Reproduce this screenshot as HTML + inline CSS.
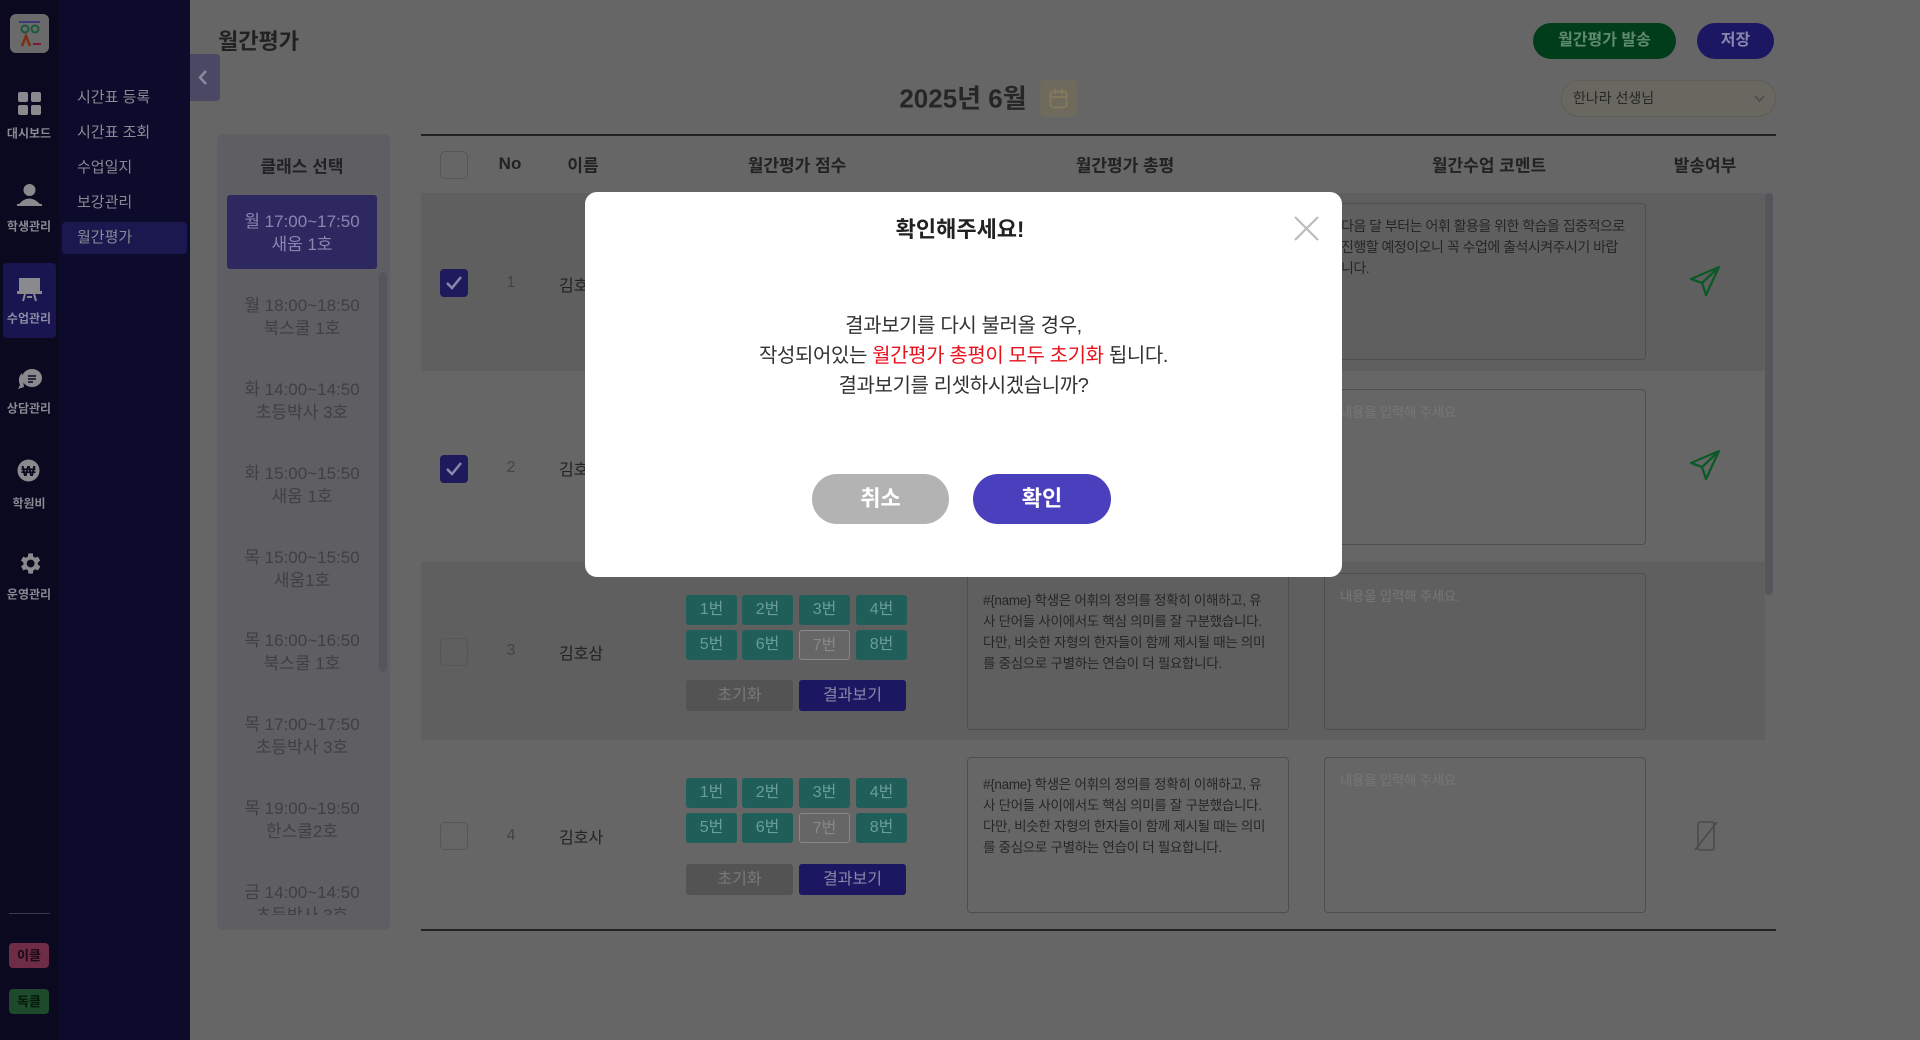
<!DOCTYPE html>
<html><head><meta charset="utf-8"><style>
*{margin:0;padding:0;box-sizing:border-box}
body{width:1920px;height:1040px;overflow:hidden;background:#666;font-family:"Liberation Sans","Noto Sans CJK KR",sans-serif;position:relative;color:#222}
.a{position:absolute}
.c{position:absolute;transform:translate(-50%,-50%);white-space:nowrap}
.nav{color:#8a8a94;font-size:12px;font-weight:bold}
.sub{color:#8a8a94;font-size:15px}
.cls{color:#3f3f44;font-size:17px;text-align:center;line-height:23px}
.hd{font-size:17px;font-weight:bold;color:#222}
.cb{position:absolute;width:28px;height:28px;border:1.5px solid #555;border-radius:5px}
.cbk{position:absolute;width:28px;height:28px;background:#1e1a5c;border-radius:4px}
.sb{position:absolute;width:51px;height:30px;background:#1f5e59;border-radius:3px;color:#6a9d98;font-size:16px;text-align:center;line-height:30px}
.so{background:#666;border:1px solid #888;color:#888}
.rst{position:absolute;width:107px;height:31px;background:#535353;border-radius:3px;color:#7a7a7a;font-size:16px;text-align:center;line-height:31px}
.res{position:absolute;width:107px;height:31px;background:#1b1760;border-radius:3px;color:#8a88a8;font-size:16px;text-align:center;line-height:31px}
.ta{position:absolute;border:1px solid #4e4e4e;border-radius:4px;padding:16px 15px;font-size:13.5px;letter-spacing:-0.3px;line-height:21px;color:#262626}
.ph{color:#777}
</style></head><body>
<div class="a" style="left:0;top:0;width:59px;height:1040px;background:#0a0920"></div>
<div class="a" style="left:59px;top:0;width:131px;height:1040px;background:#0d0b2b"></div>
<div class="a" style="left:10px;top:14px;width:39px;height:39px;background:#6a6a6a;border-radius:6px"></div>
<svg class="a" style="left:10px;top:14px" width="39" height="39"><rect x="9" y="7" width="21" height="2" fill="#3a3a7a"/><circle cx="15" cy="15" r="3.5" fill="none" stroke="#1a5a3a" stroke-width="2"/><circle cx="25" cy="15" r="3.5" fill="none" stroke="#1a5a3a" stroke-width="2"/><path d="M12 32 L16 22 L20 32" stroke="#7a3010" stroke-width="2.5" fill="none"/><rect x="23" y="29" width="8" height="2" fill="#7a1a3a"/></svg>
<svg class="a" style="left:18px;top:92px" width="23" height="23"><rect x="0" y="0" width="10" height="10" rx="2" fill="#8a8a8e"/><rect x="13" y="0" width="10" height="10" rx="2" fill="#8a8a8e"/><rect x="0" y="13" width="10" height="10" rx="2" fill="#8a8a8e"/><rect x="13" y="13" width="10" height="10" rx="2" fill="#8a8a8e"/></svg>
<div class="c nav" style="left:29px;top:133px">대시보드</div>
<svg class="a" style="left:16px;top:183px" width="27" height="25"><circle cx="13.5" cy="7" r="6" fill="#8a8a8e"/><path d="M3 21 Q13 10 24 21Z" fill="#8a8a8e"/><rect x="1" y="21" width="25" height="2" fill="#8a8a8e"/></svg>
<div class="c nav" style="left:29px;top:226px">학생관리</div>
<div class="a" style="left:3px;top:263px;width:53px;height:75px;background:#181550;border-radius:4px"></div>
<svg class="a" style="left:17px;top:278px" width="25" height="24"><rect x="2" y="0" width="21" height="13" fill="#8a8a8e"/><rect x="0" y="13" width="25" height="3" fill="#8a8a8e"/><path d="M6 23 L8 16 M19 23 L17 16 M10 19h5" stroke="#8a8a8e" stroke-width="2"/></svg>
<div class="c nav" style="left:29px;top:318px;color:#8c8ca4">수업관리</div>
<svg class="a" style="left:16px;top:367px" width="27" height="25"><path d="M6 6 Q1 11 4 18 L2 22 L8 20Z" fill="#8a8a8e"/><ellipse cx="16" cy="11" rx="10" ry="9" fill="#8a8a8e"/><path d="M12 9h8M12 12h8M12 15h5" stroke="#0a0920" stroke-width="1.5"/></svg>
<div class="c nav" style="left:29px;top:408px">상담관리</div>
<svg class="a" style="left:17px;top:459px" width="23" height="23"><circle cx="11.5" cy="11.5" r="11" fill="#8a8a8e"/><text x="11.5" y="17" font-size="15" font-weight="bold" text-anchor="middle" fill="#0a0920" font-family="Liberation Sans">₩</text></svg>
<div class="c nav" style="left:29px;top:503px">학원비</div>
<svg class="a" style="left:16px;top:550px" width="27" height="27" viewBox="0 0 24 24"><path fill="#8a8a8e" d="M19.4 13a7.5 7.5 0 0 0 0-2l2.1-1.6-2-3.5-2.5 1a7 7 0 0 0-1.7-1L15 3h-4l-.4 2.9a7 7 0 0 0-1.700 1l-2.5-1-2 3.5L6.6 11a7.5 7.5 0 0 0 0 2l-2.1 1.6 2 3.5 2.5-1a7 7 0 0 0 1.7 1L11 21h4l.4-2.9a7 7 0 0 0 1.7-1l2.5 1 2-3.5zM13 15.5a3.5 3.5 0 1 1 0-7 3.5 3.5 0 0 1 0 7z"/></svg>
<div class="c nav" style="left:29px;top:594px">운영관리</div>
<div class="a" style="left:9px;top:913px;width:41px;height:1px;background:#3a3a4a"></div>
<div class="a" style="left:9px;top:943px;width:40px;height:25px;background:#6e2c46;border-radius:4px;color:#1a0a12;font-size:13px;font-weight:bold;text-align:center;line-height:25px">이클</div>
<div class="a" style="left:9px;top:989px;width:40px;height:25px;background:#1c4a2a;border-radius:4px;color:#061a0c;font-size:13px;font-weight:bold;text-align:center;line-height:25px">독클</div>
<div class="a" style="left:62px;top:222px;width:125px;height:32px;background:#1b1850;border-radius:4px"></div>
<div class="a sub" style="left:77px;top:86px">시간표 등록</div>
<div class="a sub" style="left:77px;top:121px">시간표 조회</div>
<div class="a sub" style="left:77px;top:156px">수업일지</div>
<div class="a sub" style="left:77px;top:191px">보강관리</div>
<div class="a sub" style="left:77px;top:226px">월간평가</div>
<div class="a" style="left:190px;top:54px;width:30px;height:47px;background:#4a4862;border-radius:0 4px 4px 0"></div>
<svg class="a" style="left:197px;top:69px" width="12" height="17"><path d="M9 2 L3 8.5 L9 15" stroke="#8a8aa0" stroke-width="2.5" fill="none"/></svg>
<div class="a" style="left:218px;top:24px;font-size:22px;font-weight:bold;color:#222">월간평가</div>
<div class="c" style="left:963px;top:97px;font-size:26px;font-weight:bold;color:#262626">2025년 6월</div>
<div class="a" style="left:1040px;top:80px;width:37px;height:37px;background:#6e6a5c;border-radius:5px"></div>
<svg class="a" style="left:1049px;top:88px" width="19" height="21"><rect x="1.5" y="3.5" width="16" height="16" rx="3" fill="none" stroke="#857a5c" stroke-width="1.8"/><path d="M1.5 9h16M6 1v5M13 1v5" stroke="#857a5c" stroke-width="1.8"/></svg>
<div class="a" style="left:1533px;top:23px;width:143px;height:36px;background:#023d1b;border-radius:18px;color:#5f8a6e;font-size:16px;font-weight:bold;text-align:center;line-height:36px">월간평가 발송</div>
<div class="a" style="left:1697px;top:23px;width:77px;height:36px;background:#1b1763;border-radius:18px;color:#8886aa;font-size:16px;font-weight:bold;text-align:center;line-height:36px">저장</div>
<div class="a" style="left:1561px;top:80px;width:215px;height:37px;background:#686760;border:1px solid #5e5e58;border-radius:18px;font-size:14px;color:#262626;line-height:35px;padding-left:11px">한나라 선생님</div>
<svg class="a" style="left:1754px;top:95px" width="11" height="8"><path d="M1 1 L5.5 6 L10 1" stroke="#444" stroke-width="1.3" fill="none"/></svg>
<div class="a" style="left:217px;top:134px;width:173px;height:796px;background:#5e5e63;border-radius:6px"></div>
<div class="c hd" style="left:302px;top:165px">클래스 선택</div>
<div class="a" style="left:227px;top:195px;width:150px;height:74px;background:#2d2860;border-radius:3px"></div>
<div class="a" style="left:379px;top:272px;width:8px;height:400px;background:#55555c;border-radius:4px"></div>
<div class="a" style="left:217px;top:0;width:173px;height:915px;overflow:hidden">
<div class="a cls" style="left:0;width:170px;top:210px;color:#8a86b0">월 17:00~17:50<br>새움 1호</div>
<div class="a cls" style="left:0;width:170px;top:294px">월 18:00~18:50<br>북스쿨 1호</div>
<div class="a cls" style="left:0;width:170px;top:378px">화 14:00~14:50<br>초등박사 3호</div>
<div class="a cls" style="left:0;width:170px;top:462px">화 15:00~15:50<br>새움 1호</div>
<div class="a cls" style="left:0;width:170px;top:546px">목 15:00~15:50<br>새움1호</div>
<div class="a cls" style="left:0;width:170px;top:629px">목 16:00~16:50<br>북스쿨 1호</div>
<div class="a cls" style="left:0;width:170px;top:713px">목 17:00~17:50<br>초등박사 3호</div>
<div class="a cls" style="left:0;width:170px;top:797px">목 19:00~19:50<br>한스쿨2호</div>
<div class="a cls" style="left:0;width:170px;top:881px">금 14:00~14:50<br>초등박사 3호</div>
</div>
<div class="a" style="left:421px;top:134px;width:1355px;height:2px;background:#222"></div>
<div class="cb" style="left:440px;top:151px"></div>
<div class="c hd" style="left:510px;top:164px">No</div>
<div class="c hd" style="left:583px;top:164px">이름</div>
<div class="c hd" style="left:797px;top:164px">월간평가 점수</div>
<div class="c hd" style="left:1125px;top:164px">월간평가 총평</div>
<div class="c hd" style="left:1489px;top:164px">월간수업 코멘트</div>
<div class="c hd" style="left:1705px;top:164px">발송여부</div>
<div class="a" style="left:421px;top:193px;width:1344px;height:178px;background:#5f5f5f"></div>
<div class="a" style="left:421px;top:562px;width:1344px;height:178px;background:#5f5f5f"></div>
<div class="a" style="left:1765px;top:193px;width:8px;height:402px;background:#55555c;border-radius:4px"></div>
<div class="a" style="left:421px;top:929px;width:1355px;height:2px;background:#222"></div>
<div class="cbk" style="left:440px;top:269px"></div><svg class="a" style="left:445px;top:275px" width="18" height="16"><path d="M2 8 L7 13 L16 2" stroke="#8a88aa" stroke-width="2.5" fill="none"/></svg>
<div class="cbk" style="left:440px;top:455px"></div><svg class="a" style="left:445px;top:461px" width="18" height="16"><path d="M2 8 L7 13 L16 2" stroke="#8a88aa" stroke-width="2.5" fill="none"/></svg>
<div class="cb" style="left:440px;top:638px"></div>
<div class="cb" style="left:440px;top:822px"></div>
<div class="c" style="left:511px;top:283px;font-size:16px;color:#444">1</div>
<div class="c" style="left:511px;top:468px;font-size:16px;color:#444">2</div>
<div class="c" style="left:511px;top:651px;font-size:16px;color:#444">3</div>
<div class="c" style="left:511px;top:836px;font-size:16px;color:#444">4</div>
<div class="a" style="left:559px;top:272px;font-size:16px">김호</div>
<div class="a" style="left:559px;top:456px;font-size:16px">김호</div>
<div class="a" style="left:559px;top:640px;font-size:16px">김호삼</div>
<div class="a" style="left:559px;top:824px;font-size:16px">김호사</div>
<div class="sb" style="left:686px;top:595px">1번</div><div class="sb" style="left:742px;top:595px">2번</div><div class="sb" style="left:799px;top:595px">3번</div><div class="sb" style="left:856px;top:595px">4번</div>
<div class="sb" style="left:686px;top:630px">5번</div><div class="sb" style="left:742px;top:630px">6번</div><div class="sb so" style="left:799px;top:630px">7번</div><div class="sb" style="left:856px;top:630px">8번</div>
<div class="rst" style="left:686px;top:680px">초기화</div><div class="res" style="left:799px;top:680px">결과보기</div>
<div class="sb" style="left:686px;top:778px">1번</div><div class="sb" style="left:742px;top:778px">2번</div><div class="sb" style="left:799px;top:778px">3번</div><div class="sb" style="left:856px;top:778px">4번</div>
<div class="sb" style="left:686px;top:813px">5번</div><div class="sb" style="left:742px;top:813px">6번</div><div class="sb so" style="left:799px;top:813px">7번</div><div class="sb" style="left:856px;top:813px">8번</div>
<div class="rst" style="left:686px;top:864px">초기화</div><div class="res" style="left:799px;top:864px">결과보기</div>
<div class="ta" style="left:967px;top:573px;width:322px;height:157px">#{name} 학생은 어휘의 정의를 정확히 이해하고, 유사 단어들 사이에서도 핵심 의미를 잘 구분했습니다. 다만, 비슷한 자형의 한자들이 함께 제시될 때는 의미를 중심으로 구별하는 연습이 더 필요합니다.</div>
<div class="ta" style="left:967px;top:757px;width:322px;height:156px">#{name} 학생은 어휘의 정의를 정확히 이해하고, 유사 단어들 사이에서도 핵심 의미를 잘 구분했습니다. 다만, 비슷한 자형의 한자들이 함께 제시될 때는 의미를 중심으로 구별하는 연습이 더 필요합니다.</div>
<div class="ta" style="left:1324px;top:203px;width:322px;height:157px;padding-left:16px;padding-top:12px;font-size:14px;letter-spacing:-0.5px">다음 달 부터는 어휘 활용을 위한 학습을 집중적으로 진행할 예정이오니 꼭 수업에 출석시켜주시기 바랍니다.</div>
<div class="ta ph" style="left:1324px;top:389px;width:322px;height:156px;padding-top:12px">내용을 입력해 주세요.</div>
<div class="ta ph" style="left:1324px;top:573px;width:322px;height:157px;padding-top:12px">내용을 입력해 주세요.</div>
<div class="ta ph" style="left:1324px;top:757px;width:322px;height:156px;padding-top:12px">내용을 입력해 주세요.</div>
<svg class="a" style="left:1688px;top:264px" width="34" height="34" viewBox="0 0 34 34"><path d="M31 3 L3 15 L14 19 L18 31 Z M14 19 L31 3" stroke="#0a5a25" stroke-width="2.3" fill="none" stroke-linejoin="round"/></svg>
<svg class="a" style="left:1688px;top:448px" width="34" height="34" viewBox="0 0 34 34"><path d="M31 3 L3 15 L14 19 L18 31 Z M14 19 L31 3" stroke="#0a5a25" stroke-width="2.3" fill="none" stroke-linejoin="round"/></svg>
<svg class="a" style="left:1692px;top:819px" width="28" height="34" viewBox="0 0 28 34"><rect x="6" y="3" width="16" height="28" rx="2" fill="none" stroke="#4a4a4a" stroke-width="1.6"/><path d="M3 31 L25 3" stroke="#4a4a4a" stroke-width="1.6"/></svg>
<div class="a" style="left:585px;top:192px;width:757px;height:385px;background:#fff;border-radius:12px"></div>
<div class="c" style="left:960px;top:228px;font-size:22px;font-weight:bold;color:#222">확인해주세요!</div>
<svg class="a" style="left:1294px;top:216px" width="25" height="25"><path d="M1 1 L24 24 M24 1 L1 24" stroke="#bcbcbc" stroke-width="2.2"/></svg>
<div class="a" style="left:585px;top:311px;width:757px;text-align:center;font-size:20px;line-height:30px;color:#333;letter-spacing:-0.4px">결과보기를 다시 불러올 경우,<br>작성되어있는 <span style="color:#e8121c">월간평가 총평이 모두 초기화</span> 됩니다.<br>결과보기를 리셋하시겠습니까?</div>
<div class="a" style="left:812px;top:474px;width:137px;height:50px;background:#b3b3b3;border-radius:25px;color:#fff;font-size:22px;font-weight:bold;text-align:center;line-height:50px">취소</div>
<div class="a" style="left:973px;top:474px;width:138px;height:50px;background:#4a3fbd;border-radius:25px;color:#fff;font-size:22px;font-weight:bold;text-align:center;line-height:50px">확인</div>
</body></html>
